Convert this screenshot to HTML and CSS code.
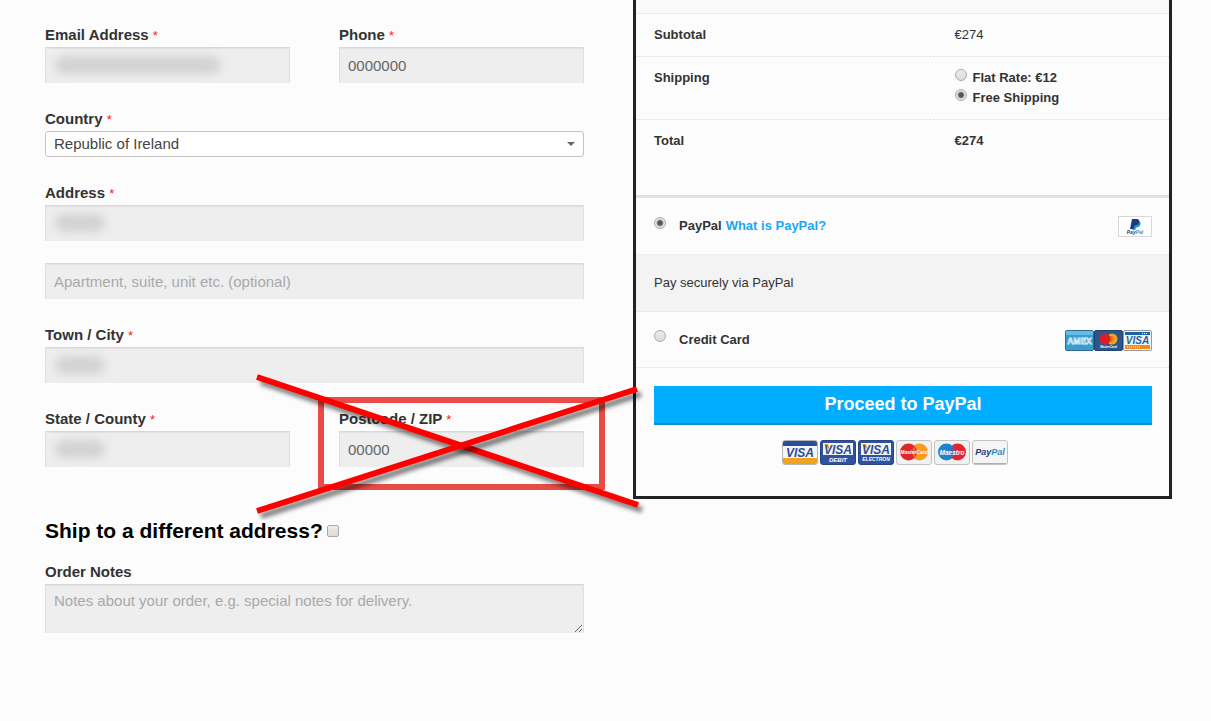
FILE: index.html
```html
<!DOCTYPE html>
<html lang="en">
<head>
  <meta charset="UTF-8">
  <meta name="viewport" content="width=device-width, initial-scale=1.0">
  <title>Checkout</title>
  <link rel="stylesheet" href="styles.css">
</head>
<body>
  <form class="checkout">
    <div class="customer-details">
      <div class="billing">
        <div class="form-columns">
          <div class="form-row">
            <label for="email">Email Address <span class="required">*</span></label>
            <div class="field">
              <input type="email" id="email">
              <span class="smudge smudge-long"></span>
            </div>
          </div>
          <div class="form-row">
            <label for="phone">Phone <span class="required">*</span></label>
            <input type="text" id="phone" value="0000000">
          </div>
        </div>

        <div class="form-row">
          <label for="country">Country <span class="required">*</span></label>
          <div class="field">
            <select id="country">
              <option>Republic of Ireland</option>
            </select>
            <svg class="select-arrow" width="8" height="4" viewBox="0 0 8 4"><path d="M0 0h8L4 4z" fill="#666"/></svg>
          </div>
        </div>

        <div class="form-row">
          <label for="address">Address <span class="required">*</span></label>
          <div class="field">
            <input type="text" id="address">
            <span class="smudge"></span>
          </div>
          <div class="field address-2">
            <input type="text" placeholder="Apartment, suite, unit etc. (optional)" aria-label="Address line 2">
          </div>
        </div>

        <div class="form-row">
          <label for="city">Town / City <span class="required">*</span></label>
          <div class="field">
            <input type="text" id="city">
            <span class="smudge"></span>
          </div>
        </div>

        <div class="form-columns">
          <div class="form-row">
            <label for="state">State / County <span class="required">*</span></label>
            <div class="field">
              <input type="text" id="state">
              <span class="smudge"></span>
            </div>
          </div>
          <div class="form-row postcode">
            <label for="postcode">Postcode / ZIP <span class="required">*</span></label>
            <input type="text" id="postcode" value="00000">
            <svg class="cross-out" width="400" height="150" viewBox="0 0 400 150">
              <rect x="71" y="30" width="281" height="87" fill="none" stroke="#e94b46" stroke-width="6"/>
              <path class="stroke" d="M7 7L388 135"/>
              <path class="stroke" d="M7 141L387 19"/>
            </svg>
          </div>
        </div>
      </div>

      <h3 class="ship-different">
        <label for="ship-different">Ship to a different address?</label>
        <input type="checkbox" id="ship-different">
      </h3>

      <div class="form-row">
        <label for="notes">Order Notes</label>
        <textarea id="notes" placeholder="Notes about your order, e.g. special notes for delivery."></textarea>
      </div>
    </div>

    <div class="order-review">
      <div class="order-head"></div>
      <table class="totals">
        <tbody>
          <tr>
            <th>Subtotal</th>
            <td>€274</td>
          </tr>
          <tr>
            <th>Shipping</th>
            <td>
              <ul class="shipping-methods">
                <li><input type="radio" name="shipping" id="flat-rate"><label for="flat-rate">Flat Rate: €12</label></li>
                <li><input type="radio" name="shipping" id="free-shipping" checked><label for="free-shipping">Free Shipping</label></li>
              </ul>
            </td>
          </tr>
          <tr class="order-total">
            <th>Total</th>
            <td>€274</td>
          </tr>
        </tbody>
      </table>

      <div class="payment">
        <div class="method">
          <input type="radio" name="payment" id="pay-paypal" checked>
          <label for="pay-paypal">PayPal</label>
          <a href="#">What is PayPal?</a>
          <span class="method-icons">
            <svg width="34" height="21" viewBox="0 0 34 21">
              <rect x=".5" y=".5" width="33" height="20" fill="#fff" stroke="#d8d8d8"/>
              <path d="M15.500 5h4.500c2.500 0 3 2 2.300 4s-2.300 2.500-4.300 2.500L17.300 14h-3z" fill="#1a9bd7"/>
              <path d="M14 3h4.500c2.700 0 3.200 2 2.500 4s-2.500 2.500-4.500 2.500L15.500 13h-3.500z" fill="#1f3a7d"/>
              <text x="17" y="18" text-anchor="middle" class="logo-text" font-size="5" fill="#1f3a7d">Pay<tspan fill="#1a9bd7">Pal</tspan></text>
            </svg>
          </span>
        </div>
        <div class="method-box">Pay securely via PayPal</div>
        <div class="method">
          <input type="radio" name="payment" id="pay-card">
          <label for="pay-card">Credit Card</label>
          <span class="method-icons">
            <svg width="29" height="21" viewBox="0 0 29 21">
              <rect x=".5" y=".5" width="28" height="20" rx="1.500" fill="#3d9bd0" stroke="#35698c"/>
              <path d="M1 1h27v4H1z" fill="#63bde6"/>
              <text x="14.500" y="13.500" text-anchor="middle" class="logo-plain" font-size="8.500" fill="#3d9bd0" stroke="#d5edf8" stroke-width=".8">AMEX</text>
            </svg>
            <svg width="29" height="21" viewBox="0 0 29 21">
              <rect x=".5" y=".5" width="28" height="20" rx="1.500" fill="#2a5690" stroke="#24446f"/>
              <circle cx="18" cy="9" r="5.500" fill="#f6a01e"/>
              <circle cx="11" cy="9" r="5.500" fill="#dc1f26"/>
              <path d="M14.500 7h4M14.500 9h5M14.500 11h4" stroke="#dc1f26" stroke-width=".8"/>
              <text x="14.500" y="18" text-anchor="middle" class="logo-plain" font-size="3" fill="#fff">MasterCard</text>
            </svg>
            <svg width="29" height="21" viewBox="0 0 29 21">
              <rect x=".5" y=".5" width="28" height="20" rx="1.500" fill="#f4f4f4" stroke="#999"/>
              <path d="M2 2h25v3H2z" fill="#1b62a8"/>
              <path d="M19 3.500h6" stroke="#fff" stroke-dasharray="1 1"/>
              <path d="M2 15h25v4H2z" fill="#f08a1d"/>
              <path d="M4 17h14" stroke="#fff" stroke-dasharray="1 1"/>
              <text x="14.500" y="14" text-anchor="middle" class="logo-text" font-size="10" fill="#1b62a8">VISA</text>
            </svg>
          </span>
        </div>
      </div>

      <div class="place-order">
        <button type="button">Proceed to PayPal</button>
        <div class="cards">
          <svg width="36" height="25" viewBox="0 0 36 25">
            <rect x=".5" y=".5" width="35" height="24" rx="2.500" fill="#f5f5f5" stroke="#b5b5b5"/>
            <path d="M1 6V3q0-2 2-2h30q2 0 2 2v3z" fill="#2b4c9b"/>
            <path d="M1 18h34v4q0 2-2 2H3q-2 0-2-2z" fill="#f0a31c"/>
            <text x="18" y="16.500" text-anchor="middle" class="logo-text" font-size="12" fill="#2b4c9b">VISA</text>
          </svg>
          <svg width="36" height="25" viewBox="0 0 36 25">
            <rect x=".5" y=".5" width="35" height="24" rx="2.500" fill="#2f529f" stroke="#294582"/>
            <path d="M3 3h30v12H3z" fill="#f5f5f5"/>
            <path d="M4 4h4l2 6z" fill="#f0a31c"/>
            <text x="18" y="13.500" text-anchor="middle" class="logo-text" font-size="12" fill="#2b4c9b">VISA</text>
            <text x="18" y="21.500" text-anchor="middle" class="logo-text" font-size="6" fill="#fff">DEBIT</text>
          </svg>
          <svg width="36" height="25" viewBox="0 0 36 25">
            <rect x=".5" y=".5" width="35" height="24" rx="2.500" fill="#2f529f" stroke="#294582"/>
            <path d="M3 3h30v12H3z" fill="#f5f5f5"/>
            <path d="M4 4h4l2 6z" fill="#f0a31c"/>
            <text x="18" y="13.500" text-anchor="middle" class="logo-text" font-size="12" fill="#2b4c9b">VISA</text>
            <text x="18" y="21" text-anchor="middle" class="logo-text" font-size="5" fill="#fff">ELECTRON</text>
          </svg>
          <svg width="36" height="25" viewBox="0 0 36 25">
            <rect x=".5" y=".5" width="35" height="24" rx="2.500" fill="#f1f1f1" stroke="#c2c2c2"/>
            <circle cx="23.500" cy="12" r="8.500" fill="#f59c25"/>
            <circle cx="12.500" cy="12" r="8.500" fill="#e0252d"/>
            <path d="M18 6q3.500 6 0 12q-3.500-6 0-12" fill="#ec6a2b"/>
            <text x="18" y="14" text-anchor="middle" class="logo-text" font-size="5" fill="#fff">MasterCard</text>
          </svg>
          <svg width="36" height="25" viewBox="0 0 36 25">
            <rect x=".5" y=".5" width="35" height="24" rx="2.500" fill="#f1f1f1" stroke="#c2c2c2"/>
            <circle cx="23.500" cy="12" r="8.500" fill="#e0252d"/>
            <circle cx="12.500" cy="12" r="8.500" fill="#1b86cd"/>
            <path d="M18 6q3.500 6 0 12q-3.500-6 0-12" fill="#7d4d8c"/>
            <text x="18" y="14.500" text-anchor="middle" class="logo-text" font-size="6.500" fill="#fff">Maestro</text>
          </svg>
          <svg width="36" height="25" viewBox="0 0 36 25">
            <rect x=".5" y=".5" width="35" height="24" rx="2.500" fill="#f5f5f5" stroke="#c2c2c2"/>
            <path d="M2 23.500h32" stroke="#b0b0b0"/>
            <text x="18" y="15" text-anchor="middle" class="logo-text" font-size="9" fill="#22407f">Pay<tspan fill="#2a8fcb">Pal</tspan></text>
          </svg>
        </div>
      </div>
    </div>
  </form>
</body>
</html>
```
FILE: styles.css
```css
* {
  box-sizing: border-box;
}

body {
  margin: 0;
  background-color: #fcfcfc;
  color: #333;
  font-family: "Liberation Sans", Arial, sans-serif;
  font-size: 13px;
  line-height: 20px;
}

.checkout {
  display: grid;
  grid-template-columns: 1fr 1fr;
  gap: 49px;
  align-items: start;
  padding: 0 39px 0 45px;
}

/* Billing form */
.customer-details {
  padding-top: 25px;
}

.billing {
  display: flex;
  flex-direction: column;
  gap: 26px;
}

.form-columns {
  display: grid;
  grid-template-columns: 1fr 1fr;
  gap: 49px;
}

.form-row label {
  display: block;
  margin-bottom: 2px;
  font-size: 15px;
  font-weight: bold;
  line-height: 20px;
}

.required {
  color: #ff1a1a;
  font-size: 13px;
  font-weight: normal;
  line-height: 1;
}

.field {
  position: relative;
}

input[type="text"],
input[type="email"],
textarea {
  display: block;
  width: 100%;
  height: 36px;
  margin: 0;
  padding: 0 8px;
  border: 1px solid #e0e0e0;
  border-top-color: #d8d8d8;
  border-bottom: 0;
  border-radius: 0;
  background-color: #eee;
  box-shadow: inset 0 1px 1px #e2e2e2;
  color: #666;
  font-family: inherit;
  font-size: 15px;
}

textarea {
  height: 49px;
  padding-top: 7px;
  line-height: 18px;
}

::placeholder {
  color: #a9a9a9;
}

.address-2 {
  margin-top: 22px;
}

select {
  display: block;
  appearance: none;
  width: 100%;
  height: 26px;
  padding: 0 8px 2px;
  border: 1px solid #c4c4c4;
  border-radius: 3px;
  background-color: #fff;
  color: #444;
  font-family: inherit;
  font-size: 15px;
}

.select-arrow {
  position: absolute;
  top: 11px;
  right: 9px;
}

.smudge {
  position: absolute;
  top: 9px;
  left: 10px;
  width: 50px;
  height: 18px;
  border-radius: 9px;
  background-color: #d2d2d2;
  filter: blur(5px);
}

.smudge-long {
  width: 166px;
}

.postcode {
  position: relative;
}

.cross-out {
  position: absolute;
  top: -39px;
  left: -89px;
  z-index: 1;
  pointer-events: none;
}

.cross-out .stroke {
  stroke: #f00;
  stroke-width: 6;
  filter: drop-shadow(4px 5px 2px rgba(0, 0, 0, 0.5));
}

.ship-different {
  display: flex;
  align-items: center;
  gap: 4px;
  margin: 49px 0 16px;
  color: #000;
  font-size: 21px;
  line-height: 30px;
}

/* Radios and checkbox */
input[type="radio"],
input[type="checkbox"] {
  appearance: none;
  flex: none;
  width: 12px;
  height: 12px;
  margin: 0;
  border: 1px solid #aaa;
  border-radius: 50%;
  background: linear-gradient(#ececec, #dcdcdc);
}

input[type="checkbox"] {
  border-radius: 2px;
}

input[type="radio"]:checked {
  background: radial-gradient(circle, #555 0 2px, #e8e8e8 4px);
}

/* Order box */
.order-review {
  border: 3px solid #222;
  border-top: 0;
}

.order-head {
  height: 14px;
  border-bottom: 1px dotted #ddd;
  background-color: #f9f9f9;
}

.totals {
  width: 100%;
  margin-bottom: 33px;
  border-spacing: 0;
}

.totals th,
.totals td {
  padding: 11px 18px;
  border-bottom: 1px dotted #ddd;
  text-align: left;
  vertical-align: top;
}

.totals th {
  width: 56%;
}

.totals td {
  padding-left: 20px;
}

.totals .order-total th,
.totals .order-total td {
  border-bottom: 0;
  font-weight: bold;
}

.shipping-methods {
  margin: 0;
  padding: 0;
  list-style: none;
  font-weight: bold;
}

.shipping-methods li {
  display: flex;
  gap: 5px;
}

.shipping-methods input[type="radio"] {
  margin: 1px 0 0 1px;
}

.payment {
  border-top: 3px solid #e1e1e1;
}

.method {
  display: flex;
  gap: 4px;
  padding: 18px 17px 18px 18px;
  border-bottom: 1px dotted #ddd;
  font-weight: bold;
}

.method input[type="radio"] {
  margin: 1px 9px 0 0;
}

.method:last-child {
  padding-bottom: 17px;
}

.method:last-child input[type="radio"] {
  margin-top: 0;
}

.method a {
  color: #1aa7f8;
  text-decoration: none;
}

.method-icons {
  display: flex;
  height: 20px;
  margin-left: auto;
}

.method-box {
  padding: 18px;
  border-bottom: 1px dotted #ddd;
  background-color: #f3f3f3;
}

.place-order {
  padding: 18px 17px 31px 18px;
}

.place-order button {
  display: block;
  width: 100%;
  height: 39px;
  padding: 0;
  border: 0;
  border-bottom: 2px solid #0090d8;
  background-color: #00adff;
  color: #fff;
  font-family: inherit;
  font-size: 18px;
  font-weight: bold;
}

.cards {
  display: flex;
  justify-content: center;
  gap: 2px;
  margin-top: 15px;
  padding-right: 17px;
}

.logo-text {
  font-family: "Liberation Sans", Arial, sans-serif;
  font-style: italic;
  font-weight: bold;
}

.logo-plain {
  font-family: "Liberation Sans", Arial, sans-serif;
  font-weight: bold;
}
```
